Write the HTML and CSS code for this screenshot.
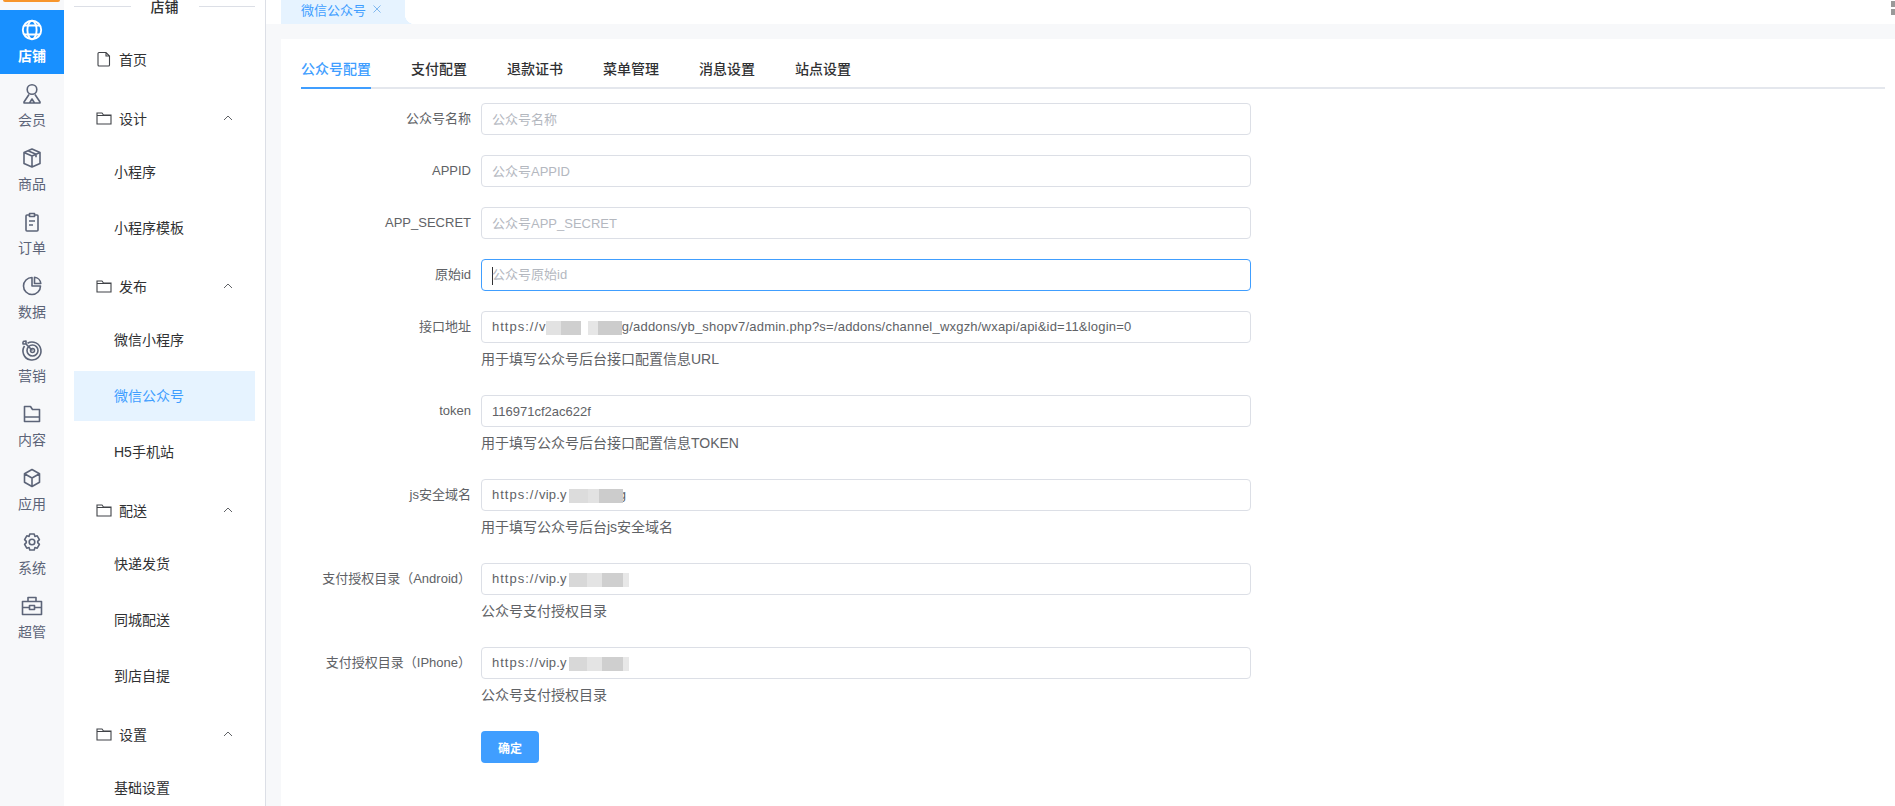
FILE: index.html
```html
<!DOCTYPE html>
<html>
<head>
	<meta charset="utf-8" />
	<title>微信公众号</title>
	<link rel="stylesheet" href="styles.css">
</head>
<body>
	<div class="rail">
		<div class="logo"></div>
		<a class="railItem active">
			<svg viewBox="0 0 24 24"><circle cx="12" cy="12" r="9.2"/><ellipse cx="12" cy="12" rx="4.6" ry="9.2"/><path d="M4 7.5h16M4 16.5h16"/></svg>
			<span>店铺</span>
		</a>
		<a class="railItem">
			<svg viewBox="0 0 24 24"><circle cx="12" cy="7.5" r="4.8"/><path d="M9 12.5l-5 7.5v1h16v-1l-5-7.5M9.5 21l2.5-4 2.5 4"/></svg>
			<span>会员</span>
		</a>
		<a class="railItem">
			<svg viewBox="0 0 24 24"><path d="M12 3l8 3.5v11L12 21l-8-3.500v-11zM4 6.500l8 3.500 8-3.500M12 10v11M8 4.800l8 3.500v3"/></svg>
			<span>商品</span>
		</a>
		<a class="railItem">
			<svg viewBox="0 0 24 24"><path d="M9 5H7a1 1 0 0 0-1 1v14a1 1 0 0 0 1 1h10a1 1 0 0 0 1-1V6a1 1 0 0 0-1-1h-2M9.500 3.500h5v3h-5zM9 11h6M9 15h4"/></svg>
			<span>订单</span>
		</a>
		<a class="railItem">
			<svg viewBox="0 0 24 24"><path d="M12 3.500A8.500 8.500 0 1 0 20.500 12H12zM14.500 3.300a7 7 0 0 1 6.300 6.200h-6.300z"/></svg>
			<span>数据</span>
		</a>
		<a class="railItem">
			<svg viewBox="0 0 24 24"><path d="M7.500 5.200A9 9 0 1 1 4.500 8"/><circle cx="12.500" cy="12.500" r="5.500"/><circle cx="12.500" cy="12.500" r="2"/><path d="M12.500 12.500L6 6M6 6V3L3 3.500M6 6H3L3 3.500"/></svg>
			<span>营销</span>
		</a>
		<a class="railItem">
			<svg viewBox="0 0 24 24"><path d="M4.500 4.500h6l2 3h7v12h-15zM4.500 15h15"/></svg>
			<span>内容</span>
		</a>
		<a class="railItem">
			<svg viewBox="0 0 24 24"><path d="M12 3.500l7.500 4.200v8.600L12 20.500l-7.500-4.200V7.700zM4.500 7.700l7.500 4.300 7.500-4.300M12 12v8.500"/></svg>
			<span>应用</span>
		</a>
		<a class="railItem">
			<svg viewBox="0 0 24 24"><path d="M9.800 4h4.400l.7 2.400 2.300-.6 2.200 3.800-1.700 1.800 0 1.200 1.700 1.800-2.200 3.800-2.300-.6-.7 2.400H9.800l-.7-2.400-2.300.6-2.200-3.800 1.700-1.800 0-1.200-1.700-1.800 2.200-3.800 2.300.6z"/><circle cx="12" cy="12" r="2.800"/></svg>
			<span>系统</span>
		</a>
		<a class="railItem">
			<svg viewBox="0 0 24 24"><path d="M2.500 7.500h19v13h-19zM8 7.500V3.500h8v4M2.500 13.500h7M14.500 13.500h7M9.500 11.500h5v4h-5z"/></svg>
			<span>超管</span>
		</a>
	</div>

	<div class="side">
		<div class="sideTitle"><i></i><span>店铺</span><i></i></div>

		<div class="head">
			<svg class="headIcon" viewBox="0 0 16 16"><path d="M3 1.500h7l3.500 3.500v9a1 1 0 0 1-1 1h-9.500a1 1 0 0 1-1-1v-11.500a1 1 0 0 1 1-1zM10 1.500v3.500h3.500"/></svg>
			<span>首页</span>
		</div>

		<div class="head">
			<svg class="headIcon" viewBox="0 0 16 16"><path d="M1 3h5l1.500 2h7.500v9h-14zM1 5.500h14"/></svg>
			<span>设计</span>
			<svg class="arrow" viewBox="0 0 10 6"><path d="M1 5l4-4 4 4"/></svg>
		</div>
		<div class="sub">小程序</div>
		<div class="sub">小程序模板</div>

		<div class="head">
			<svg class="headIcon" viewBox="0 0 16 16"><path d="M1 3h5l1.500 2h7.500v9h-14zM1 5.500h14"/></svg>
			<span>发布</span>
			<svg class="arrow" viewBox="0 0 10 6"><path d="M1 5l4-4 4 4"/></svg>
		</div>
		<div class="sub">微信小程序</div>
		<div class="sub on">微信公众号</div>
		<div class="sub">H5手机站</div>

		<div class="head">
			<svg class="headIcon" viewBox="0 0 16 16"><path d="M1 3h5l1.500 2h7.500v9h-14zM1 5.500h14"/></svg>
			<span>配送</span>
			<svg class="arrow" viewBox="0 0 10 6"><path d="M1 5l4-4 4 4"/></svg>
		</div>
		<div class="sub">快递发货</div>
		<div class="sub">同城配送</div>
		<div class="sub">到店自提</div>

		<div class="head">
			<svg class="headIcon" viewBox="0 0 16 16"><path d="M1 3h5l1.500 2h7.500v9h-14zM1 5.500h14"/></svg>
			<span>设置</span>
			<svg class="arrow" viewBox="0 0 10 6"><path d="M1 5l4-4 4 4"/></svg>
		</div>
		<div class="sub">基础设置</div>
	</div>

	<div class="main">
		<div class="tabBar">
			<div class="pageTab">
				<span>微信公众号</span>
				<svg class="tabClose" viewBox="0 0 10 10"><path d="M1.500 1.500l7 7M8.500 1.500l-7 7"/></svg>
			</div>
			<div class="barIcon"><i></i><i></i></div>
		</div>

		<div class="card">
			<div class="tabs">
				<a class="tab active">公众号配置</a>
				<a class="tab">支付配置</a>
				<a class="tab">退款证书</a>
				<a class="tab">菜单管理</a>
				<a class="tab">消息设置</a>
				<a class="tab">站点设置</a>
			</div>

			<div class="row">
				<label>公众号名称</label>
				<div class="ctrl"><input class="input" placeholder="公众号名称" /></div>
			</div>
			<div class="row">
				<label>APPID</label>
				<div class="ctrl"><input class="input" placeholder="公众号APPID" /></div>
			</div>
			<div class="row">
				<label>APP_SECRET</label>
				<div class="ctrl"><input class="input" placeholder="公众号APP_SECRET" /></div>
			</div>
			<div class="row">
				<label>原始id</label>
				<div class="ctrl"><div class="input focus"><i class="caret"></i><span class="ph">公众号原始id</span></div></div>
			</div>
			<div class="row">
				<label>接口地址</label>
				<div class="ctrl">
					<div class="input url"><b>https://</b>v<i class="mask maskUrl"></i>g/addons/yb_shopv7/admin.php?s=/addons/channel_wxgzh/wxapi/api&amp;id=11&amp;login=0</div>
					<p class="help">用于填写公众号后台接口配置信息URL</p>
				</div>
			</div>
			<div class="row">
				<label>token</label>
				<div class="ctrl">
					<input class="input" value="116971cf2ac622f" />
					<p class="help">用于填写公众号后台接口配置信息TOKEN</p>
				</div>
			</div>
			<div class="row">
				<label>js安全域名</label>
				<div class="ctrl">
					<div class="input url"><b>https://</b>vip.y<i class="mask maskJs"></i>g</div>
					<p class="help">用于填写公众号后台js安全域名</p>
				</div>
			</div>
			<div class="row">
				<label>支付授权目录（Android）</label>
				<div class="ctrl">
					<div class="input url"><b>https://</b>vip.y<i class="mask maskPay"></i></div>
					<p class="help">公众号支付授权目录</p>
				</div>
			</div>
			<div class="row">
				<label>支付授权目录（IPhone）</label>
				<div class="ctrl">
					<div class="input url"><b>https://</b>vip.y<i class="mask maskPay"></i></div>
					<p class="help">公众号支付授权目录</p>
				</div>
			</div>
			<div class="row">
				<label></label>
				<div class="ctrl"><button class="submit">确定</button></div>
			</div>
		</div>
	</div>
</body>
</html>
```

FILE: styles.css
```css
*{
	margin: 0;
	padding: 0;
	box-sizing: border-box;
}
html,body{
	height: 100%;
	overflow: hidden;
}
body{
	display: flex;
	background: #ffffff;
	font-family: "Liberation Sans", "Noto Sans CJK SC", sans-serif;
	font-size: 14px;
	color: #303133;
}

/* 左侧一级菜单 */
.rail{
	width: 64px;
	flex-shrink: 0;
	background: #f7f8fa;
}
.logo{
	height: 2px;
	margin: 0 4px 8px 3px;
	background: #f7952b;
	border-radius: 0 0 6px 6px;
}
.railItem{
	display: flex;
	flex-direction: column;
	align-items: center;
	height: 64px;
	padding-top: 8px;
	color: #5c6478;
}
.railItem svg{
	width: 24px;
	height: 24px;
	fill: none;
	stroke: #5c6478;
	stroke-width: 1.6;
	stroke-linejoin: round;
}
.railItem span{
	margin-top: 4px;
	line-height: 20px;
}
.railItem.active{
	background: #1890ff;
	color: #ffffff;
	font-weight: bold;
}
.railItem.active svg{
	stroke: #ffffff;
	stroke-width: 1.9;
}

/* 二级菜单 */
.side{
	width: 202px;
	flex-shrink: 0;
	padding: 0 10px;
	border-right: 1px solid #dcdfe6;
}
.sideTitle{
	display: flex;
	align-items: center;
	height: 14px;
	margin-bottom: 21px;
	font-weight: 500;
	line-height: 14px;
}
.sideTitle i{
	flex: 1;
	height: 1px;
	margin-top: -2px;
	background: #dcdfe6;
}
.sideTitle span{
	padding: 0 20px;
}
.head{
	display: flex;
	align-items: center;
	height: 50px;
	margin-top: 9px;
	padding: 0 22px 2px 22px;
}
.headIcon{
	width: 16px;
	height: 16px;
	margin-right: 7px;
	fill: none;
	stroke: #404348;
	stroke-width: 1.1;
}
.arrow{
	width: 10px;
	height: 6px;
	margin-left: auto;
	fill: none;
	stroke: #606266;
	stroke-width: 1;
}
.sub{
	height: 50px;
	margin-top: 3px;
	padding-left: 40px;
	line-height: 50px;
}
.sub + .sub{
	margin-top: 6px;
}
.sub.on{
	background: #e6f3ff;
	color: #409eff;
}

/* 右侧内容 */
.main{
	flex: 1;
	min-width: 0;
	background: #f7f8fa;
}
.tabBar{
	display: flex;
	height: 24px;
	padding-left: 15px;
	background: #ffffff;
	overflow: hidden;
}
.pageTab{
	position: relative;
	display: flex;
	align-items: center;
	width: 124px;
	height: 24px;
	padding: 0 0 6px 20px;
	background: #e6f3ff;
	color: #409eff;
	font-size: 13px;
}
.pageTab::after{
	content: "";
	position: absolute;
	right: -10px;
	bottom: 0;
	width: 10px;
	height: 10px;
	background: radial-gradient(circle at 100% 0, transparent 10px, #e6f3ff 10.5px);
}
.tabClose{
	width: 10px;
	height: 10px;
	margin-left: 6px;
	fill: none;
	stroke: #7fb8f0;
	stroke-width: 1;
}
.barIcon{
	margin-left: auto;
	width: 4px;
	padding-top: 1px;
}
.barIcon i{
	display: block;
	height: 6px;
	margin-bottom: 2px;
	background: #999999;
}
.card{
	height: 100%;
	margin: 15px 0 0 15px;
	padding: 10px 10px 0 20px;
	background: #ffffff;
}
.tabs{
	display: flex;
	height: 40px;
	margin-bottom: 14px;
	border-bottom: 2px solid #e4e7ed;
}
.tab{
	height: 40px;
	padding: 0 20px;
	font-weight: 500;
	line-height: 40px;
}
.tab:first-child{
	padding-left: 0;
}
.tab.active{
	position: relative;
	color: #409eff;
}
.tab.active::after{
	content: "";
	position: absolute;
	left: 0;
	right: 20px;
	bottom: 0;
	height: 2px;
	background: #409eff;
}

/* 表单 */
.row{
	display: flex;
	margin-bottom: 20px;
}
.row label{
	width: 180px;
	flex-shrink: 0;
	padding-right: 10px;
	font-size: 13px;
	line-height: 32px;
	text-align: right;
	color: #606266;
}
.ctrl{
	width: 770px;
}
.input{
	display: block;
	width: 100%;
	height: 32px;
	padding: 0 10px;
	border: 1px solid #dcdfe6;
	border-radius: 4px;
	outline: none;
	font-family: inherit;
	font-size: 13px;
	line-height: 30px;
	color: #606266;
	white-space: nowrap;
}
.input::placeholder,
.ph{
	color: #b4b8bf;
}
.input.focus{
	border-color: #409eff;
}
.url{
	letter-spacing: .21px;
}
.url b{
	font-weight: normal;
	letter-spacing: 1px;
}
.caret{
	display: inline-block;
	width: 1px;
	height: 18px;
	margin-right: -1px;
	vertical-align: middle;
	background: #303133;
}
.mask{
	position: relative;
	display: inline-block;
	height: 14px;
	vertical-align: middle;
}
.maskUrl{
	width: 76px;
	background: linear-gradient(90deg, #e2e2e2 0 20%, #cfcfcf 20% 46%, #ffffff 46% 55%, #e6e6e6 55% 68%, #cccccc 68% 100%);
}
.maskJs{
	width: 54px;
	margin: 0 -4px 0 2px;
	background: linear-gradient(90deg, #dcdcdc 0 35%, #e2e2e2 35% 55%, #cccccc 55% 100%);
}
.maskPay{
	width: 60px;
	margin-left: 2px;
	background: linear-gradient(90deg, #d8d8d8 0 30%, #e4e4e4 30% 55%, #cfcfcf 55% 90%, #e8e8e8 90% 100%);
}
.help{
	font-size: 14px;
	line-height: 32px;
	color: #606266;
}
.submit{
	display: block;
	width: 58px;
	height: 32px;
	border: 0;
	border-radius: 4px;
	background: #409eff;
	color: #ffffff;
	font-family: inherit;
	font-size: 12px;
	font-weight: bold;
}
```
